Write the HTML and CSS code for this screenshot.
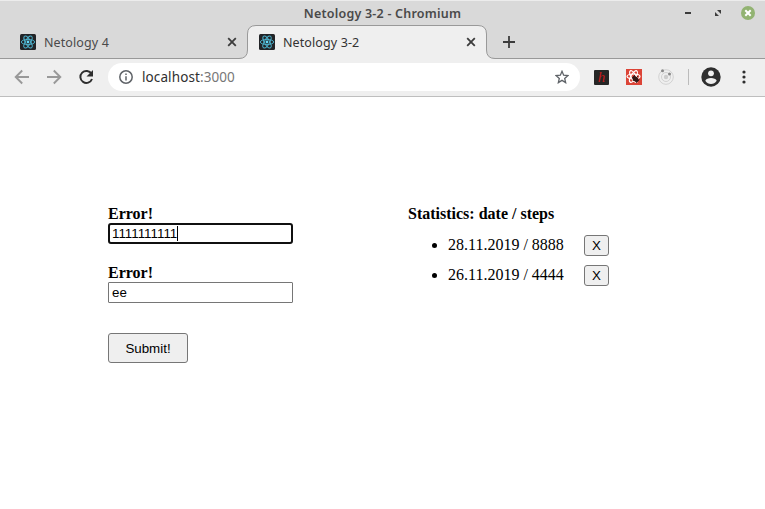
FILE: index.html
```html
<!DOCTYPE html>
<html lang="en">
<head>
<meta charset="utf-8">
<title>Netology 3-2</title>
<link rel="stylesheet" href="styles.css">
</head>
<body>
<svg class="defs" width="0" height="0" aria-hidden="true">
  <symbol id="react" viewBox="0 0 16 16">
    <rect width="16" height="16" rx="1.5" fill="#222427"/>
    <g fill="none" stroke="#4eb5d0" stroke-width=".9">
      <ellipse cx="8" cy="8" rx="6.7" ry="2.6"/>
      <ellipse cx="8" cy="8" rx="6.7" ry="2.6" transform="rotate(60 8 8)"/>
      <ellipse cx="8" cy="8" rx="6.7" ry="2.6" transform="rotate(120 8 8)"/>
    </g>
    <circle cx="8" cy="8" r="1.4" fill="#61dafb"/>
  </symbol>
  <symbol id="close" viewBox="0 0 10 10"><path d="M1.2 1.2 8.8 8.8M8.8 1.2 1.2 8.8" fill="none" stroke="#3c3c3c" stroke-width="1.8"/></symbol>
</svg>
<header class="window">
  <div class="titlebar">
    <span class="title">Netology 3-2 - Chromium</span>
    <div class="controls">
      <svg width="8" height="14" viewBox="0 0 8 14"><path d="M1 7h6" stroke="#3c3c3c" stroke-width="2"/></svg>
      <svg width="8" height="14" viewBox="0 0 8 14"><path d="M3 4h4v4zM1 6v4h4z" fill="#3c3c3c"/></svg>
      <svg width="14" height="14" viewBox="0 0 14 14"><circle cx="7" cy="7" r="7" fill="#92b372"/><path d="m4.3 4.3 5.4 5.4m0-5.4-5.4 5.4" stroke="#fff" stroke-width="2"/></svg>
    </div>
  </div>
  <nav class="tabs">
    <div class="tab">
      <svg class="favicon"><use href="#react"/></svg>
      <span class="name">Netology 4</span>
      <svg class="close"><use href="#close"/></svg>
    </div>
    <div class="tab active">
      <svg class="shape" viewBox="0 0 258 35"><path d="M0 33.5h1Q9.500 33.500 9.500 25V9Q9.500.500 18 .500H240Q248.500.500 248.500 9V25Q248.500 33.500 257 33.500h1V35H0z" fill="#efefef"/><path d="M0 33.500h1Q9.500 33.500 9.500 25V9Q9.500.500 18 .500H240Q248.500.500 248.500 9V25Q248.500 33.500 257 33.500h1" fill="none" stroke="#999"/></svg>
      <svg class="favicon"><use href="#react"/></svg>
      <span class="name">Netology 3-2</span>
      <svg class="close"><use href="#close"/></svg>
    </div>
    <svg class="plus" width="12" height="12" viewBox="0 0 12 12"><path d="M6 0v12M0 6h12" stroke="#3c3c3c" stroke-width="1.8"/></svg>
  </nav>
  <div class="toolbar">
    <div class="nav">
      <svg width="16" height="16" viewBox="0 0 16 16"><path d="M15 8H2M8.200 1.500 1.700 8l6.500 6.500" fill="none" stroke="#999" stroke-width="1.900"/></svg>
      <svg width="16" height="16" viewBox="0 0 16 16"><path d="M1 8h13M7.800 1.500 14.300 8l-6.500 6.500" fill="none" stroke="#999" stroke-width="1.900"/></svg>
      <svg width="16" height="16" viewBox="0 0 16 16"><path d="M13.500 4.800A6 6 0 1 0 14 10" fill="none" stroke="#2e2e2e" stroke-width="2"/><path d="M15 1v6.500H8.500z" fill="#2e2e2e"/></svg>
    </div>
    <div class="address">
      <svg width="14" height="14" viewBox="0 0 14 14"><circle cx="7" cy="7" r="6.200" fill="none" stroke="#5f6368" stroke-width="1.500"/><path d="M7 6.200v4.300M7 3.500v1.500" stroke="#5f6368" stroke-width="1.500"/></svg>
      <span class="url">localhost<span>:3000</span></span>
      <svg class="star" width="14" height="14" viewBox="0 0 14 14"><path d="m7 1.300 1.650 3.900 4.250.4-3.200 2.800.95 4.150L7 10.350l-3.650 2.200.95-4.150-3.200-2.800 4.250-.4z" fill="none" stroke="#5f6368" stroke-width="1.300"/></svg>
    </div>
    <span class="ext-h">h</span>
    <svg class="ext-react" width="16" height="16" viewBox="0 0 16 16"><rect width="16" height="16" fill="#dc4437"/><g fill="none" stroke="#fff" stroke-width="1.200"><ellipse cx="7.500" cy="7.500" rx="6.500" ry="2.500"/><ellipse cx="7.500" cy="7.500" rx="6.500" ry="2.500" transform="rotate(60 7.500 7.500)"/><ellipse cx="7.500" cy="7.500" rx="6.500" ry="2.500" transform="rotate(120 7.500 7.500)"/></g><ellipse cx="9.500" cy="10" rx="3.500" ry="2.400" transform="rotate(40 9.500 10)" fill="#321714"/><path d="m6 9 3-3M7 12l5-5M10 14l3.500-3.500" stroke="#321714" stroke-width=".8"/></svg>
    <svg class="ext-orbit" width="16" height="16" viewBox="0 0 16 16"><g fill="none" stroke="#d2d2d2"><circle cx="8" cy="8" r="7.300"/><circle cx="8" cy="8" r="4.500"/></g><circle cx="8" cy="8" r="2.200" fill="#ccc"/><circle cx="4.500" cy="1.700" r="1.500" fill="#888"/><circle cx="11.500" cy="5" r="1.500" fill="#888"/></svg>
    <i class="divider"></i>
    <svg class="user" width="20" height="20" viewBox="0 0 20 20"><circle cx="10" cy="10" r="9.700" fill="#2e2e2e"/><circle cx="10" cy="6.300" r="2.900" fill="#efefef"/><path d="M4.300 13.700C5.500 10.200 14.500 10.200 15.700 13.700Q13.500 16.900 10 16.900T4.300 13.700z" fill="#efefef"/></svg>
    <svg class="dots" width="4" height="14" viewBox="0 0 4 14"><g fill="#2e2e2e"><circle cx="2" cy="2" r="1.600"/><circle cx="2" cy="7" r="1.600"/><circle cx="2" cy="12" r="1.600"/></g></svg>
  </div>
</header>
<main class="page">
  <form class="form">
    <b>Error!</b>
    <div class="field focused">1111111111<i class="caret"></i></div>
    <b>Error!</b>
    <div class="field">ee</div>
    <button class="submit" type="button">Submit!</button>
  </form>
  <section class="stats">
    <b>Statistics: date / steps</b>
    <ul>
      <li><span>28.11.2019 / 8888</span><button type="button">X</button></li>
      <li><span>26.11.2019 / 4444</span><button type="button">X</button></li>
    </ul>
  </section>
</main>
</body>
</html>
```
FILE: styles.css
```css
* { box-sizing: border-box; }
body { margin: 0; height: 509px; overflow: hidden; background: #fff; color: #000; font: 16px/18px "Liberation Serif", serif; }
svg { display: block; flex: none; }
.defs { position: absolute; }
.window { font-family: "Noto Sans", sans-serif; background: #d9d9d9; }
.titlebar { height: 25px; border-top: 1px solid #ececec; display: grid; grid-template-columns: 1fr auto 1fr; align-items: center; }
.title { grid-column: 2; font-size: 12.5px; line-height: 22px; padding-top: 2px; font-weight: 600; color: #4a4a4a; letter-spacing: .22px; }
.controls { display: flex; justify-content: flex-end; align-items: center; padding-right: 10px; gap: 22px; height: 22px; }
.controls svg:last-child { margin-left: -3px; }
.tabs { height: 34px; display: flex; align-items: center; box-shadow: inset 0 -1px #999; }
.tab { position: relative; width: 239px; height: 34px; display: flex; align-items: center; padding: 0 11px 0 12px; }
.tab:first-child { width: 247px; padding: 0 10px 0 20px; }
.active { width: 240px; }
.shape { position: absolute; left: -9px; top: 0; width: 258px; height: 35px; }
.favicon { position: relative; width: 16px; height: 16px; }
.name { position: relative; flex: 1; margin-left: 8px; padding-top: 1px; font-size: 12.5px; letter-spacing: .1px; color: #4a4a4a; white-space: nowrap; }
.active .name { color: #333; }
.close { position: relative; width: 10px; height: 10px; }
.plus { margin-left: 16px; }
.toolbar { height: 38px; background: #efefef; border-bottom: 1px solid #bebebe; display: flex; align-items: center; padding-bottom: 1px; }
.nav { display: flex; gap: 16px; margin-left: 14px; }
.address { width: 472px; height: 28px; margin: 0 14px; border-radius: 14px; background: #fff; display: flex; align-items: center; padding: 0 11px; }
.url { flex: 1; margin-left: 9px; font-size: 13.5px; letter-spacing: .1px; color: #303030; }
.url span { color: #777; }
.ext-h { width: 15px; height: 15px; border-radius: 1px; background: #262626; color: #c41b1b; font: italic 15px/14px "Liberation Serif", serif; text-align: center; }
.ext-react { margin-left: 17px; }
.ext-orbit { margin-left: 16px; }
.divider { width: 1px; height: 16px; margin: 0 12px 0 14px; background: #bbb; }
.dots { margin-left: 21px; }
.page { display: grid; grid-template-columns: 300px 300px; padding: 108px 0 0 108px; }
.form, .stats { display: flex; flex-direction: column; align-items: flex-start; }
button, .field { font: 13.333px/15px "Liberation Sans", sans-serif; }
.field { width: 185px; height: 21px; border: 1px solid #767676; border-radius: 1px; padding: 2px 3px; display: flex; margin-bottom: 20px; }
.focused { border: 2px solid #101010; border-radius: 3px; padding: 1px 2px; }
.caret { width: 1px; height: 15px; background: #000; }
button { border: 1px solid #767676; border-radius: 3px; background: #efefef; color: #000; padding: 0; }
.submit { width: 80px; height: 30px; margin-top: 10px; }
.stats ul { margin: 7px 0 0; padding-left: 40px; }
.stats li { height: 30px; line-height: 30px; }
.stats li button { width: 25px; height: 21px; margin-left: 20px; vertical-align: baseline; }
```
